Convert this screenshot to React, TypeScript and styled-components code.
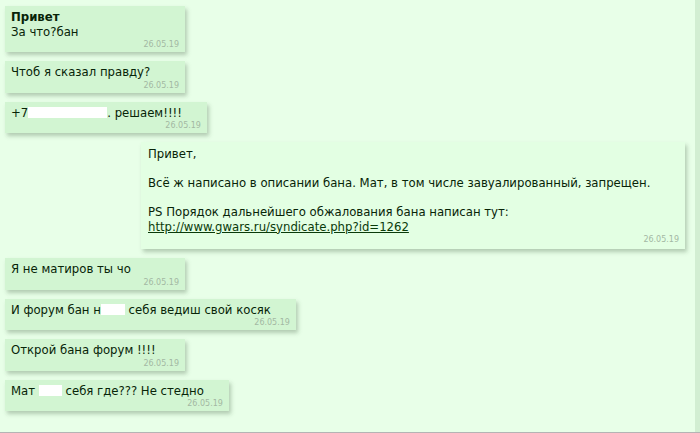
import React from "react";
import styled, { createGlobalStyle } from "styled-components";

const Global = createGlobalStyle`
  html, body { margin: 0; padding: 0; background: #e8ffe8; }
  body { width: 700px; height: 433px; overflow: hidden; }
`;

const Frame = styled.div`
  width: 700px;
  height: 433px;
  box-sizing: border-box;
  display: flex;
  border-bottom: 1px solid #b4b4b4;
  background: #e8ffe8;
`;

const Feed = styled.div`
  flex: 1;
  display: flex;
  flex-direction: column;
  align-items: flex-start;
  gap: 9px;
  padding: 6px 10px 0 5px;
  font-family: "DejaVu Sans Condensed", "DejaVu Sans", Verdana, sans-serif;
  font-stretch: condensed;
  font-size: 13px;
  line-height: 14.5px;
  color: #082408;
`;

const Rail = styled.div`
  width: 5px;
  background: #d2eed2;
`;

const Bubble = styled.div<{ $mine?: boolean }>`
  box-sizing: border-box;
  min-width: 180px;
  max-width: 80%;
  padding: ${(p) => (p.$mine ? "5px 6px 4px 7px" : "4px 6px 2px 6px")};
  background: ${(p) => (p.$mine ? "#e3ffe3" : "#d2f5d2")};
  box-shadow: 2px 3px 4px rgba(80, 110, 80, 0.35);
  align-self: ${(p) => (p.$mine ? "flex-end" : "flex-start")};
  display: flex;
  flex-direction: column;
`;

const Author = styled.div`
  font-weight: bold;
`;

const Text = styled.div`
  white-space: pre-wrap;
  padding-right: 19px;
`;

const Stamp = styled.div`
  align-self: flex-end;
  font-family: "DejaVu Sans", Verdana, sans-serif;
  font-stretch: normal;
  font-size: 8px;
  line-height: 11px;
  color: #a3b8a3;
`;

const Hidden = styled.span<{ $w: number }>`
  display: inline-block;
  width: ${(p) => p.$w}px;
  height: 11px;
  vertical-align: -1px;
  background: #ffffff;
`;

const Link = styled.a`
  color: #0a3a0a;
  text-decoration: underline;
`;

const date = "26.05.19";

export default function App() {
  return (
    <>
      <Global />
      <Frame>
        <Feed>
          <Bubble>
            <Author>Привет</Author>
            <Text>За что?бан</Text>
            <Stamp>{date}</Stamp>
          </Bubble>
          <Bubble>
            <Text>Чтоб я сказал правду?</Text>
            <Stamp>{date}</Stamp>
          </Bubble>
          <Bubble>
            <Text>
              +7<Hidden $w={79} />. решаем!!!!
            </Text>
            <Stamp>{date}</Stamp>
          </Bubble>
          <Bubble $mine>
            <Text>
              {"Привет,\n\nВсё ж написано в описании бана. Мат, в том числе завуалированный, запрещен.\n\nPS Порядок дальнейшего обжалования бана написан тут: "}
              <Link href="#">http://www.gwars.ru/syndicate.php?id=1262</Link>
            </Text>
            <Stamp>{date}</Stamp>
          </Bubble>
          <Bubble>
            <Text>Я не матиров ты чо</Text>
            <Stamp>{date}</Stamp>
          </Bubble>
          <Bubble>
            <Text>
              И форум бан н<Hidden $w={24} /> себя ведиш свой косяк
            </Text>
            <Stamp>{date}</Stamp>
          </Bubble>
          <Bubble>
            <Text>Открой бана форум !!!!</Text>
            <Stamp>{date}</Stamp>
          </Bubble>
          <Bubble>
            <Text>
              Мат <Hidden $w={23} /> себя где??? Не стедно
            </Text>
            <Stamp>{date}</Stamp>
          </Bubble>
        </Feed>
        <Rail />
      </Frame>
    </>
  );
}
